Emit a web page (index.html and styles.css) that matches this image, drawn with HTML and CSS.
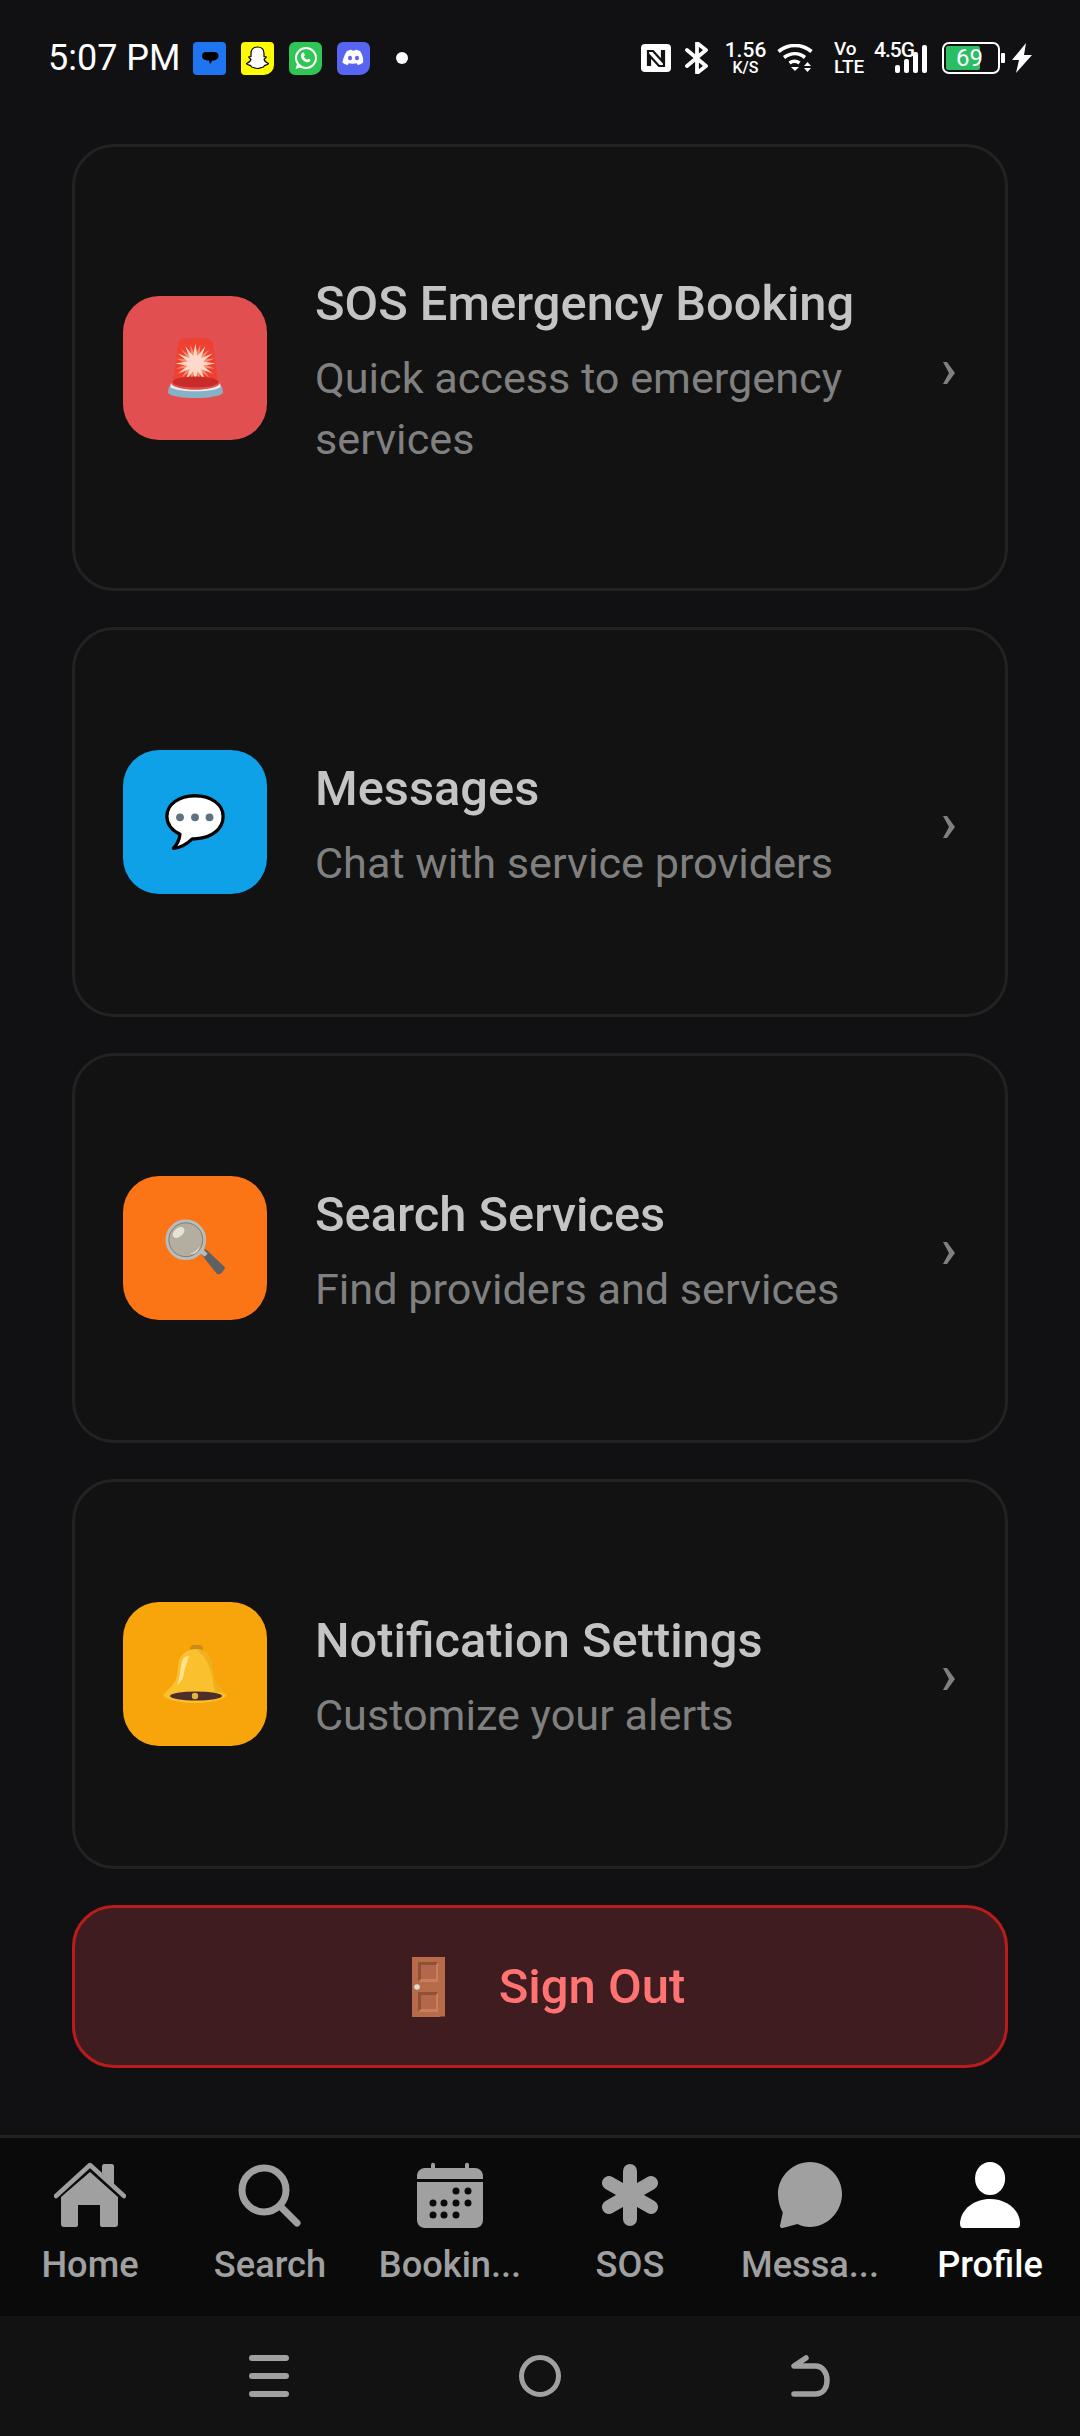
FILE: index.html
```html
<!DOCTYPE html>
<html lang="en">
<head>
<meta charset="utf-8">
<title>Profile</title>
<link rel="stylesheet" href="styles.css">
</head>
<body>
<div class="app">
  <header class="status">
    <div class="status-left">
      <span class="time">5:07 PM</span>
      <div class="notifs">
        <svg class="ni" viewBox="0 0 33 33"><rect width="33" height="33" rx="4" fill="#1f74f0"/><path d="M13 10h8c3 0 4.500 1.500 4.500 4s-2.500 4.500-6 4.500l-2.500 3.500-1-3.500c-4 0-7-1.500-7-4.500s2-4 4-4z" fill="#000"/></svg>
        <svg class="ni" viewBox="0 0 33 33"><path d="M4 0h25a4 4 0 0 1 4 4v19a10 10 0 0 1-10 10H4a4 4 0 0 1-4-4V4a4 4 0 0 1 4-4z" fill="#fffc00"/><path d="M16.500 5c4.500 0 6.500 3 6.500 6.500v3l2.300.5c0 1.200-2.300 1.500-2.300 2.200.5 2 2.500 3.800 4.500 4.300 0 1.500-3 1.500-4 2l-1 1.500c-2 0-3.500 1.500-6 1.500s-4-1.500-6-1.500l-1-1.500c-1-.5-4-.5-4-2 2-.5 4-2.300 4.500-4.300 0-.7-2.300-1-2.300-2.200l2.300-.5v-3C10 8 12 5 16.500 5z" fill="#fff" stroke="#000" stroke-width="1.200"/></svg>
        <svg class="ni" viewBox="0 0 33 33"><path d="M6 0h21a6 6 0 0 1 6 6v17a10 10 0 0 1-10 10H6a6 6 0 0 1-6-6V6a6 6 0 0 1 6-6z" fill="#2fc655"/><circle cx="17" cy="16" r="10" fill="none" stroke="#fff" stroke-width="2"/><path d="M6.500 27l2-6.500 4.500 4.500z" fill="#fff"/><path d="M13 11c1-1 2-.5 2.500 1l.3 1.500-1 1c.7 1.500 1.700 2.500 3.300 3.200l1-1 2.200.8c.4 1.500-1 3.200-3.200 2.800-3.500-.8-5.700-3.200-6.200-5.800-.2-1.400.4-2.700 1.100-3.500z" fill="#fff"/></svg>
        <svg class="ni" viewBox="0 0 33 33"><path d="M6 0h21a6 6 0 0 1 6 6v17a10 10 0 0 1-10 10H6a6 6 0 0 1-6-6V6a6 6 0 0 1 6-6z" fill="#5865f2"/><path d="M10 9c2-1 4-1.300 4.500-1.300l.5 1c1-.2 2-.2 3 0l.5-1c.5 0 2.500.3 4.500 1.300 2.500 3.500 3.500 7.500 3.200 11.500-2 1.500-3.800 2.200-5.400 2.600l-1.300-2c1-.3 1.500-.6 1.500-.6-3.500 1.600-7 1.600-10.500 0 0 0 .5.300 1.500.6l-1.300 2c-1.600-.4-3.400-1.100-5.400-2.600C6.300 16.500 7.500 12.500 10 9z" fill="#fff"/><ellipse cx="13" cy="16" rx="2" ry="2.300" fill="#5865f2"/><ellipse cx="20" cy="16" rx="2" ry="2.300" fill="#5865f2"/></svg>
      </div>
      <span class="dot"></span>
    </div>
    <div class="status-right">
      <svg class="s-nfc" viewBox="0 0 30 28"><rect width="30" height="28" rx="4" fill="#fff"/><path d="M7 22V7h5l9 10V6M23 6v16h-5L9 12v10" fill="none" stroke="#111" stroke-width="2.200"/></svg>
      <svg class="s-bt" viewBox="0 0 24 32"><path d="M2 8l19 16-9 7V1l9 7L2 24" fill="none" stroke="#fff" stroke-width="3.800" stroke-linecap="round" stroke-linejoin="round"/></svg>
      <div class="speed"><span>1.56</span><span class="speed-u">K/S</span></div>
      <svg class="s-wifi" viewBox="0 0 36 28"><path d="M1.500 7.500c10-8 23-8 33 0M7 13.500c7-5 15-5 21 0M12.500 19c3.500-2.500 6.500-2.500 10 0" fill="none" stroke="#fff" stroke-width="3.600"/><path d="M14 23h8l-4 4z" fill="#fff"/><path d="M27 22l3.500-4 3.500 4zM27 24h7l-3.500 4z" fill="#fff"/></svg>
      <div class="volte">Vo<br>LTE</div>
      <div class="net">
        <span class="net-l">4.5G</span>
        <div class="bars"><i class="b1"></i><i class="b2"></i><i class="b3"></i><i class="b4"></i></div>
      </div>
      <div class="batt"><div class="batt-box"><div class="batt-fill"></div><span class="batt-n">69</span></div><i class="batt-tip"></i></div>
      <svg class="s-bolt" viewBox="0 0 22 30"><path d="M15 0L1 17h7l-3 13L21 12h-8z" fill="#fff"/></svg>
    </div>
  </header>

  <main class="list">
    <a class="card card-tall">
      <div class="ico ico-red">
        <svg class="emoji emoji-siren" viewBox="0 0 55 60"><defs><polygon id="star" points="27.300,5.600 29.400,17.900 37.300,8.300 33,19.900 44.600,15.600 35,23.500 47.300,25.600 35,27.700 44.600,35.600 33,31.300 37.300,42.900 29.400,33.300 27.300,45.600 25.200,33.300 17.300,42.900 21.600,31.300 10,35.600 19.600,27.700 7.300,25.600 19.600,23.500 10,15.600 21.600,19.900 17.300,8.300 25.200,17.900"/></defs><path d="M10 5C11 1 16 0 27.500 0S44 1 45 5l5 39H5z" fill="#ef4132"/><use href="#star" fill="#ff8a65" transform="rotate(15 27.300 25.600)"/><use href="#star" fill="#fdd9cb"/><ellipse cx="27.500" cy="44" rx="23" ry="5.500" fill="#c92c28"/><path d="M3 45c2 9 47 9 49 0l1 5c0 8-51 8-51 0z" fill="#e8eef0"/><path d="M1 48c5 7 48 7 53 0l1 6c0 8-55 8-55 0z" fill="#87b2c6"/></svg>
      </div>
      <div class="txt"><h2>SOS Emergency Booking</h2><p>Quick access to emergency services</p></div>
      <svg class="chev" viewBox="0 0 12 22"><path d="M0 0h4l8 11-8 11H0l6-11z" fill="#808080"/></svg>
    </a>
    <a class="card">
      <div class="ico ico-blue">
        <svg class="emoji" viewBox="0 0 64 60"><path d="M32 2C15 2 2 11 2 24c0 9 6 15 14 19-.5 4-2 10-7 15 9-.5 15-5 20-10 2 0 3 0 5-.3C50 47 62 37 62 24 62 11 49 2 32 2z" fill="#fff" stroke="#000" stroke-width="3.500" stroke-linejoin="round"/><circle cx="16" cy="25" r="4.200" fill="#5f7280"/><circle cx="32" cy="25" r="4.200" fill="#5f7280"/><circle cx="47.500" cy="25" r="4.200" fill="#5f7280"/></svg>
      </div>
      <div class="txt"><h2>Messages</h2><p>Chat with service providers</p></div>
      <svg class="chev" viewBox="0 0 12 22"><path d="M0 0h4l8 11-8 11H0l6-11z" fill="#808080"/></svg>
    </a>
    <a class="card">
      <div class="ico ico-orange">
        <svg class="emoji" viewBox="0 0 62 60"><path d="M37 36l5-5 19 18c2 2 0 3-1 5l-2 2c-2 2-4 1-5 0z" fill="#5e6063"/><path d="M34 34l4-4 6 6-3 3z" fill="#b9b9b9"/><circle cx="21.500" cy="21.500" r="19.500" fill="#b3ae9f" stroke="#b9bcbe" stroke-width="3"/><circle cx="21.500" cy="21.500" r="17.500" fill="none" stroke="#807d73" stroke-width="1"/><ellipse cx="14" cy="14" rx="7" ry="4.500" fill="#e5e2da" transform="rotate(-40 14 14)"/><path d="M26 36c4-1 8-4 10-8-1 6-5 9-10 8z" fill="#e0ddd4"/></svg>
      </div>
      <div class="txt"><h2>Search Services</h2><p>Find providers and services</p></div>
      <svg class="chev" viewBox="0 0 12 22"><path d="M0 0h4l8 11-8 11H0l6-11z" fill="#808080"/></svg>
    </a>
    <a class="card">
      <div class="ico ico-yellow">
        <svg class="emoji emoji-bell" viewBox="0 0 64 58"><rect x="27" y="0" width="13" height="8" rx="4" fill="#c98c1a"/><path d="M33 4c9 0 13 5 15 12 2 9 1 16 5 22 3 4 7 8 11 12 0 3-14 8-32 8S0 53 0 50c4-4 8-8 11-12 4-6 3-13 5-22 2-7 8-12 17-12z" fill="#fbc02d"/><path d="M33 4c9 0 13 5 15 12 2 9 1 16 5 22 3 4 7 8 11 12-4-2-8-3-12-3-2-8-2-30-19-43z" fill="#eeb01c"/><path d="M20 14c-3 6-2 16-6 26 4-3 6-6 7-12 1-6 3-10 5-17-3 0-5 1-6 3z" fill="#ffe38c"/><ellipse cx="33" cy="51" rx="26" ry="4.500" fill="#4e2e2c"/><circle cx="32" cy="51" r="3.200" fill="#e6b73b"/></svg>
      </div>
      <div class="txt"><h2>Notification Settings</h2><p>Customize your alerts</p></div>
      <svg class="chev" viewBox="0 0 12 22"><path d="M0 0h4l8 11-8 11H0l6-11z" fill="#808080"/></svg>
    </a>
    <a class="signout">
      <svg class="door" viewBox="0 0 33 60"><rect width="33" height="60" fill="#b86b48"/><path d="M6 5h20v20H6zM6 35h20v20H6z" fill="#8f5238"/><path d="M6 25l3-3h17v3zM26 5v20h-2V8zM6 55l3-3h17v3zM26 35v20h-2V38z" fill="#c97f5c"/><path d="M9 8h15v14H9zM9 38h15v14H9z" fill="#b4674a"/><circle cx="5" cy="30" r="2.800" fill="#dcdcd6"/><rect x="28" y="59" width="5" height="1" fill="#7d4630"/></svg>
      <span>Sign Out</span>
    </a>
  </main>

  <nav class="tabs">
    <div class="tab"><svg viewBox="0 0 72 66"><path d="M48 11V4c0-1 1-2 2-2h8c1 0 2 1 2 2v20z" fill="#a0a0a0"/><path d="M2 34L36 3l34 31" fill="none" stroke="#a0a0a0" stroke-width="4.500" stroke-linecap="round" stroke-linejoin="round"/><path d="M36 11L64 36v27c0 2-1 3-3 3H48c-1 0-2-1-2-2V44H24v20c0 1-1 2-2 2H10c-2 0-3-1-3-3V36z" fill="#a0a0a0" transform="translate(0 -1)"/></svg><span>Home</span></div>
    <div class="tab"><svg viewBox="0 0 66 66"><circle cx="27" cy="28" r="22" fill="none" stroke="#a0a0a0" stroke-width="7"/><path d="M43 44l17 17" stroke="#a0a0a0" stroke-width="7" stroke-linecap="round"/></svg><span>Search</span></div>
    <div class="tab"><svg viewBox="0 0 66 66"><path d="M14 3c0-3 4-3 4 0v3h30V3c0-3 4-3 4 0v3h6c4 0 8 3 8 8v3H0v-3c0-5 4-8 8-8h6z" fill="#a0a0a0"/><path d="M0 20h66v38c0 5-4 8-8 8H8c-4 0-8-3-8-8z" fill="#a0a0a0"/><g fill="#0a0a0b"><circle cx="39" cy="29" r="3.500"/><circle cx="51" cy="29" r="3.500"/><circle cx="16" cy="41" r="3.500"/><circle cx="27" cy="41" r="3.500"/><circle cx="39" cy="41" r="3.500"/><circle cx="51" cy="41" r="3.500"/><circle cx="16" cy="53" r="3.500"/><circle cx="27" cy="53" r="3.500"/><circle cx="39" cy="53" r="3.500"/></g></svg><span>Bookin...</span></div>
    <div class="tab"><svg viewBox="0 0 60 66"><g stroke="#a0a0a0" stroke-width="14" stroke-linecap="round"><path d="M30 9v48"/><path d="M9 21l42 24"/><path d="M51 21L9 45"/></g></svg><span>SOS</span></div>
    <div class="tab"><svg viewBox="0 0 68 68"><path d="M34 0c18 0 33 15 33 33S52 67 34 67c-5 0-9-1-13-3L6 68c-2 .5-3-1-3-2l3-14C3 47 1 40 1 33 1 15 16 0 34 0z" fill="#a0a0a0"/></svg><span>Messa...</span></div>
    <div class="tab tab-on"><svg viewBox="0 0 62 68"><ellipse cx="31" cy="17" rx="15.500" ry="17" fill="#fff"/><path d="M0 63C1 48 15 38 31 38s30 10 31 25c0 3-1 5-3 5H3c-2 0-3-2-3-5z" fill="#fff"/></svg><span>Profile</span></div>
  </nav>
  <footer class="sysnav">
    <svg class="sys-menu" viewBox="0 0 40 42"><path d="M3 3h34M3 21h34M3 39h34" stroke="#a0a0a0" stroke-width="6" stroke-linecap="round"/></svg>
    <svg class="sys-home" viewBox="0 0 42 42"><circle cx="21" cy="21" r="18.500" fill="none" stroke="#a0a0a0" stroke-width="5"/></svg>
    <svg class="sys-back" viewBox="0 0 40 42"><path d="M15 3L3 11h21c8 0 12 7 12 14 0 8-4 14-12 14H3" fill="none" stroke="#a0a0a0" stroke-width="5.500" stroke-linecap="round" stroke-linejoin="round"/></svg>
  </footer>
</div>
</body>
</html>
```
FILE: styles.css
```css
* { box-sizing: border-box; margin: 0; padding: 0; }
html, body { background: #111113; }
body { width: 1080px; height: 2436px; overflow: hidden; font-family: Roboto, "Noto Sans", sans-serif; }
.app { width: 1080px; height: 2436px; display: flex; flex-direction: column; }

.status { height: 144px; flex: none; display: flex; justify-content: space-between; align-items: flex-start; padding: 40px 47px 0 48px; color: #fff; }
.status-left, .status-right { display: flex; align-items: center; height: 36px; }
.time { font-size: 36px; line-height: 36px; width: 145px; }
.notifs { display: flex; gap: 15px; }
.ni { width: 33px; height: 33px; display: block; }
.dot { width: 12px; height: 12px; border-radius: 50%; background: #fff; margin-left: 26px; }
.s-nfc { width: 30px; height: 28px; margin-right: 14px; }
.s-bt { width: 24px; height: 32px; margin-right: 18px; }
.speed { display: flex; flex-direction: column; align-items: center; font-size: 21px; line-height: 19px; font-weight: 500; width: 37px; margin-right: 13px; }
.speed-u { font-size: 16px; line-height: 15px; }
.s-wifi { width: 36px; height: 28px; margin-right: 21px; }
.volte { font-size: 19px; line-height: 18px; font-weight: 500; width: 29px; margin-right: 11px; }
.net { position: relative; width: 53px; height: 36px; margin-right: 15px; }
.net-l { position: absolute; left: 0; top: 0; font-size: 21px; line-height: 20px; font-weight: 500; letter-spacing: -1px; }
.bars { position: absolute; right: 0; bottom: 3px; display: flex; align-items: flex-end; gap: 4px; }
.bars i { width: 5px; background: #fff; border-radius: 2px; display: block; }
.b1 { height: 8px; }
.b2 { height: 14px; }
.b3 { height: 21px; }
.b4 { height: 28px; }
.batt { display: flex; align-items: center; gap: 1px; margin-right: 6px; }
.batt-box { position: relative; width: 58px; height: 32px; border: 2px solid #fff; border-radius: 7px; padding: 2px; }
.batt-fill { width: 34px; height: 100%; background: #2cbe64; border-radius: 2px; }
.batt-n { position: absolute; left: 12px; right: 0; top: -1px; font-size: 24px; line-height: 30px; color: #fff; }
.batt-tip { width: 4px; height: 10px; background: #fff; border-radius: 1px; display: block; }
.s-bolt { width: 22px; height: 30px; }

.list { flex: 1; display: flex; flex-direction: column; gap: 36px; padding: 0 72px; }
.card { height: 390px; flex: none; display: flex; align-items: center; background: #121212; border: 3px solid #222; border-radius: 42px; padding: 0 48px; }
.card-tall { height: 447px; }
.ico { width: 144px; height: 144px; flex: none; border-radius: 36px; display: flex; align-items: center; justify-content: center; margin-right: 49px; }
.ico-red { background: #e14f50; }
.ico-blue { background: #0ea1e8; }
.ico-orange { background: #fb7415; }
.ico-yellow { background: #f8a50c; }
.emoji { width: 60px; height: 60px; display: block; }
.emoji-siren { width: 55px; }
.emoji-bell { width: 64px; height: 58px; }
.txt { flex: 1; min-width: 0; padding: 6px 40px 0 0; margin-left: -1px; }
.txt h2 { font-size: 48.8px; line-height: 63px; font-weight: 500; color: #c4c4c4; }
.txt p { font-size: 43.2px; line-height: 61px; font-weight: 400; color: #808080; margin-top: 13px; }
.chev { width: 12px; height: 22px; flex: none; margin: 10px 2px 0 0; }

.signout { height: 163px; flex: none; display: flex; align-items: center; justify-content: center; gap: 54px; padding-left: 17px; background: #3f1c1f; border: 3px solid #b91c1c; border-radius: 42px; color: #ff7373; font-size: 49px; font-weight: 500; }
.door { width: 33px; height: 60px; display: block; }

.tabs { height: 181px; flex: none; display: flex; padding: 24px 0 0; background: #0a0a0b; border-top: 3px solid #222; }
.tab { flex: 1; display: flex; flex-direction: column; align-items: center; color: #a0a0a0; font-size: 36.2px; font-weight: 500; }
.tab svg { height: 66px; width: auto; display: block; margin-bottom: 16px; }
.tab span { line-height: 42px; }
.tab-on { color: #fff; }

.sysnav { height: 120px; flex: none; background: #121212; display: flex; justify-content: center; align-items: center; }
.sysnav svg { display: block; }
.sys-menu { width: 40px; height: 42px; }
.sys-home { width: 42px; height: 42px; margin: 0 230px; }
.sys-back { width: 40px; height: 42px; }
```
